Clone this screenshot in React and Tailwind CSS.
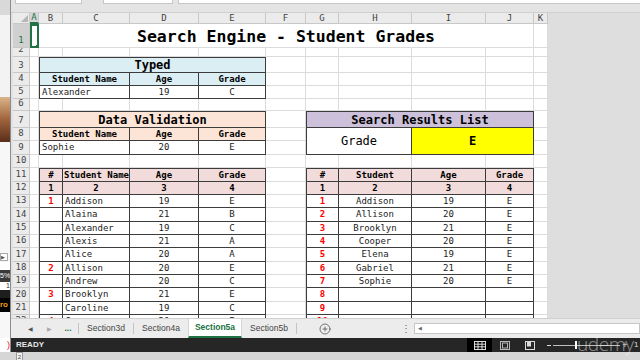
import { CirclePlus } from "lucide-react";

const MONO = "font-['DejaVu_Sans_Mono','Liberation_Mono',monospace]";
const SANS = "font-['Liberation_Sans',Arial,sans-serif]";

// grid placement classes, written out so Tailwind sees them
const CS = ["", "col-start-1", "col-start-2", "col-start-3", "col-start-4", "col-start-5", "col-start-6", "col-start-7", "col-start-8", "col-start-9", "col-start-10", "col-start-11", "col-start-12"];
const CE = ["", "col-end-1", "col-end-2", "col-end-3", "col-end-4", "col-end-5", "col-end-6", "col-end-7", "col-end-8", "col-end-9", "col-end-10", "col-end-11", "col-end-12", "col-end-13"];
const RS = ["", "row-start-1", "row-start-2", "row-start-3", "row-start-4", "row-start-5", "row-start-6", "row-start-7", "row-start-8", "row-start-9", "row-start-10", "row-start-11", "row-start-12", "row-start-13", "row-start-14", "row-start-15", "row-start-16", "row-start-17", "row-start-18", "row-start-19", "row-start-20", "row-start-21", "row-start-22", "row-start-23", "row-start-24"];
const RE = ["", "row-end-1", "row-end-2", "row-end-3", "row-end-4", "row-end-5", "row-end-6", "row-end-7", "row-end-8", "row-end-9", "row-end-10", "row-end-11", "row-end-12", "row-end-13", "row-end-14", "row-end-15", "row-end-16", "row-end-17", "row-end-18", "row-end-19", "row-end-20", "row-end-21", "row-end-22", "row-end-23", "row-end-24", "row-end-25"];

const COLS = ["A", "B", "C", "D", "E", "F", "G", "H", "I", "J", "K"];
const ROWS = Array.from({ length: 22 }, (_, i) => i + 1);

// sheet col letter -> grid column, sheet row -> grid row
const pos = (letter, row, span = 1, rows = 1) => {
  const c = COLS.indexOf(letter) + 2;
  const r = row + 1;
  return `${CS[c]} ${RS[r]} ${span > 1 ? CE[c + span] : ""} ${rows > 1 ? RE[r + rows] : ""}`;
};

const students = [
  ["1", "Addison", "19", "E"],
  ["", "Alaina", "21", "B"],
  ["", "Alexander", "19", "C"],
  ["", "Alexis", "21", "A"],
  ["", "Alice", "20", "A"],
  ["2", "Allison", "20", "E"],
  ["", "Andrew", "20", "C"],
  ["3", "Brooklyn", "21", "E"],
  ["", "Caroline", "19", "C"],
  ["4", "Cooper", "20", "E"],
];

const results = [
  ["1", "Addison", "19", "E"],
  ["2", "Allison", "20", "E"],
  ["3", "Brooklyn", "21", "E"],
  ["4", "Cooper", "20", "E"],
  ["5", "Elena", "19", "E"],
  ["6", "Gabriel", "21", "E"],
  ["7", "Sophie", "20", "E"],
  ["8", "", "", ""],
  ["9", "", "", ""],
  ["10", "", "", ""],
];

function T({ c, r, span = 1, rows = 1, top, left, bg = "bg-white", align = "justify-center", className = "", children }) {
  return (
    <div
      className={`${pos(c, r, span, rows)} ${bg} ${align} flex items-center overflow-hidden whitespace-nowrap leading-none border-r border-b border-[#3c3c3c] ${top ? "border-t" : ""} ${left ? "border-l" : ""} ${className}`}
    >
      {children}
    </div>
  );
}

function SideWindow() {
  return (
    <div className={`w-[11px] flex flex-col border-r border-[#8c8c8c] overflow-hidden ${SANS}`}>
      <div className="h-[15px] bg-[#d9d9d9]" />
      <div className="h-[82px] bg-[#f3f3f3]" />
      <div className="h-[45px] bg-gradient-to-b from-[#d9b48a] via-[#a0643c] to-[#5a2e1c]" />
      <div className="h-[110px] bg-[#f7f7f7]" />
      <div className="h-[10px] bg-[#f7f7f7] flex items-center">
        <span className="w-[8px] h-[8px] border border-[#aaa] bg-white text-[5px] leading-[6px] text-[#555]">▶</span>
      </div>
      <div className="h-[8px] bg-white" />
      <div className="h-[12px] bg-[#3a3a3a] text-[7px] text-white leading-[12px] whitespace-nowrap">5%</div>
      <div className="h-[8px] bg-white text-[7px] text-right leading-[8px] text-[#333]">1</div>
      <div className="h-[8px] bg-[#1e1e1e]" />
      <div className="h-[14px] bg-black text-[8px] font-bold text-[#f39c12] leading-[14px]">ro</div>
      <div className="flex-1 bg-[#f7f7f7]" />
      <div className="h-[14px] bg-white text-[#d22] text-[9px] leading-[14px] text-right">)</div>
    </div>
  );
}

function TopStrip() {
  return (
    <div className="h-[13px] flex bg-[#e4e4e4] border-b border-[#d0d0d0]">
      <div className="ml-[4px] w-[67px] h-[4px] bg-white border-x border-b border-[#c6c6c6]" />
      <div className="ml-[21px] w-[70px] h-[4px] bg-white border-x border-b border-[#c6c6c6]" />
      <div className="ml-[5px] flex-1 h-[4px] bg-white border-l border-b border-[#c6c6c6]" />
    </div>
  );
}

function Sheet() {
  return (
    <div
      className={`grid grid-cols-[17px_9px_24px_67px_69px_67px_40px_33px_73px_74px_48px_14px] grid-rows-[11px_24px_9px_16px_13px_13px_12px_17px_13px_14px_13px_14px_13px_13px_14px_13px_13px_14px_13px_13px_14px_13px_13px] w-[535px] h-full overflow-hidden text-[9px] text-[#222] ${MONO}`}
    >
      {/* gridlines */}
      {ROWS.map((row) =>
        COLS.map((letter) => (
          <div key={letter + row} className={`${pos(letter, row)} bg-white border-r border-b border-[#dcdcdc]`} />
        ))
      )}

      {/* corner */}
      <div className="col-start-1 row-start-1 bg-[#ebebeb] border-r border-b border-[#c8c8c8] flex items-end justify-end p-[1px]">
        <svg width="7" height="7" viewBox="0 0 7 7">
          <polygon points="7,0 7,7 0,7" fill="#b5b5b5" />
        </svg>
      </div>

      {/* column letters */}
      {COLS.map((letter, i) => (
        <div
          key={"h" + letter}
          className={`${CS[i + 2]} row-start-1 flex items-center justify-center leading-none border-r border-[#c8c8c8] ${
            letter === "A" ? "bg-[#d6d6d6] text-[#217346] border-b-2 border-b-[#217346]" : "bg-[#ebebeb] text-[#444] border-b"
          }`}
        >
          {letter}
        </div>
      ))}

      {/* row numbers */}
      {ROWS.map((row) => (
        <div
          key={"r" + row}
          className={`col-start-1 ${RS[row + 1]} flex items-end justify-center pb-[2px] overflow-hidden leading-none border-r border-b border-[#c8c8c8] ${
            row === 1 ? "bg-[#d0d0d0] text-[#217346]" : "bg-[#ebebeb] text-[#444]"
          }`}
        >
          {row}
        </div>
      ))}

      {/* selected A1 */}
      <div className={`${pos("A", 1)} relative border-2 border-[#217346]`}>
        <span className="absolute -right-[2px] -bottom-[2px] w-[3px] h-[3px] bg-[#217346]" />
      </div>

      {/* title */}
      <div className={`${pos("B", 1, 9)} bg-white border-r border-b border-[#dcdcdc] flex items-center justify-center pt-[3px] text-[16.5px] font-bold text-black leading-none whitespace-nowrap`}>
        Search Engine - Student Grades
      </div>

      {/* Typed */}
      <T c="B" r={3} span={4} top left bg="bg-[#daeef3]" className="text-[12px] font-bold text-black">Typed</T>
      <T c="B" r={4} span={2} left bg="bg-[#daeef3]" className="font-bold text-black">Student Name</T>
      <T c="D" r={4} bg="bg-[#daeef3]" className="font-bold text-black">Age</T>
      <T c="E" r={4} bg="bg-[#daeef3]" className="font-bold text-black">Grade</T>
      <T c="B" r={5} span={2} left align="justify-start pl-[2px]">Alexander</T>
      <T c="D" r={5}>19</T>
      <T c="E" r={5}>C</T>

      {/* Data Validation */}
      <T c="B" r={7} span={4} top left bg="bg-[#fce4d6]" className="text-[12px] font-bold text-black">Data Validation</T>
      <T c="B" r={8} span={2} left bg="bg-[#fce4d6]" className="font-bold text-black">Student Name</T>
      <T c="D" r={8} bg="bg-[#fce4d6]" className="font-bold text-black">Age</T>
      <T c="E" r={8} bg="bg-[#fce4d6]" className="font-bold text-black">Grade</T>
      <T c="B" r={9} span={2} left align="justify-start pl-[2px]">Sophie</T>
      <T c="D" r={9}>20</T>
      <T c="E" r={9}>E</T>

      {/* Search results box */}
      <T c="G" r={7} span={4} top left bg="bg-[#ccc0da]" className="text-[12px] font-bold text-black">Search Results List</T>
      <T c="G" r={8} span={2} rows={2} left className="text-[12px] text-black">Grade</T>
      <T c="I" r={8} span={2} rows={2} bg="bg-[#ffff00]" className="text-[12px] font-bold text-black">E</T>

      {/* student list */}
      <T c="B" r={11} top left bg="bg-[#f2dcdb]" className="font-bold text-black">#</T>
      <T c="C" r={11} top bg="bg-[#f2dcdb]" align="justify-start pl-[1px]" className="font-bold text-black">Student Name</T>
      <T c="D" r={11} top bg="bg-[#f2dcdb]" className="font-bold text-black">Age</T>
      <T c="E" r={11} top bg="bg-[#f2dcdb]" className="font-bold text-black">Grade</T>
      <T c="B" r={12} left bg="bg-[#f2dcdb]" className="font-bold text-black">1</T>
      <T c="C" r={12} bg="bg-[#f2dcdb]" className="font-bold text-black">2</T>
      <T c="D" r={12} bg="bg-[#f2dcdb]" className="font-bold text-black">3</T>
      <T c="E" r={12} bg="bg-[#f2dcdb]" className="font-bold text-black">4</T>
      {students.map(([n, name, age, grade], i) => (
        <div key={"s" + i} className="contents">
          <T c="B" r={13 + i} left className="font-bold text-[#ff0000]">{n}</T>
          <T c="C" r={13 + i} align="justify-start pl-[2px]">{name}</T>
          <T c="D" r={13 + i}>{age}</T>
          <T c="E" r={13 + i}>{grade}</T>
        </div>
      ))}

      {/* results list */}
      <T c="G" r={11} top left bg="bg-[#f2dcdb]" className="font-bold text-black">#</T>
      <T c="H" r={11} top bg="bg-[#f2dcdb]" className="font-bold text-black">Student</T>
      <T c="I" r={11} top bg="bg-[#f2dcdb]" className="font-bold text-black">Age</T>
      <T c="J" r={11} top bg="bg-[#f2dcdb]" className="font-bold text-black">Grade</T>
      <T c="G" r={12} left bg="bg-[#f2dcdb]" className="font-bold text-black">1</T>
      <T c="H" r={12} bg="bg-[#f2dcdb]" className="font-bold text-black">2</T>
      <T c="I" r={12} bg="bg-[#f2dcdb]" className="font-bold text-black">3</T>
      <T c="J" r={12} bg="bg-[#f2dcdb]" className="font-bold text-black">4</T>
      {results.map(([n, name, age, grade], i) => (
        <div key={"q" + i} className="contents">
          <T c="G" r={13 + i} left className="font-bold text-[#ff0000]">{n}</T>
          <T c="H" r={13 + i}>{name}</T>
          <T c="I" r={13 + i}>{age}</T>
          <T c="J" r={13 + i}>{grade}</T>
        </div>
      ))}
    </div>
  );
}

function Sep() {
  return <div className="w-px my-[4px] bg-[#c4c4c4]" />;
}

function Tab({ label, active }) {
  return (
    <div
      className={`w-[54px] flex items-center justify-center overflow-hidden whitespace-nowrap ${
        active ? "bg-white text-[#217346] font-bold border-b-2 border-[#217346] border-x border-x-[#d4d4d4]" : "text-[#444]"
      }`}
    >
      {label}
    </div>
  );
}

function TabBar() {
  return (
    <div className={`h-[20px] flex items-stretch bg-[#ececec] border-t border-[#d0d0d0] text-[8.5px] leading-none ${SANS}`}>
      <div className="w-[14px]" />
      <div className="w-[10px] flex items-center justify-center text-[6px] text-[#555]">◀</div>
      <div className="w-[9px]" />
      <div className="w-[10px] flex items-center justify-center text-[6px] text-[#aaa]">▶</div>
      <div className="w-[8px]" />
      <div className="w-[12px] flex items-center justify-center font-bold text-[#217346]">...</div>
      <div className="w-[4px]" />
      <Sep />
      <Tab label="Section3d" />
      <Sep />
      <Tab label="Section4a" />
      <Tab label="Section5a" active />
      <Tab label="Section5b" />
      <Sep />
      <div className="w-[22px]" />
      <div className="flex items-center">
        <CirclePlus size={12} strokeWidth={1.6} color="#555" />
      </div>
      <div className="w-[72px]" />
      <div className="w-[6px] flex items-center justify-center text-[#666] text-[10px]">⋮</div>
      <div className="w-[5px]" />
      <div className="flex-1 my-[4px] bg-white border border-[#c6c6c6] flex items-center pl-[3px] text-[5px] text-[#666]">◀</div>
    </div>
  );
}

function StatusBar() {
  return (
    <div className={`h-[14px] flex items-stretch bg-[#262626] text-[8px] leading-none ${SANS}`}>
      <div className="pl-[5px] flex items-center font-bold text-[#e6e6e6]">READY</div>
      <div className="flex-1" />
      <div className="w-[25px] bg-black flex items-center justify-center">
        <svg width="12" height="9" viewBox="0 0 12 9">
          <rect x="0.5" y="0.5" width="11" height="8" fill="none" stroke="#dcdcdc" />
          <path d="M4 0.5V8.5M8 0.5V8.5M0.5 3.2H11.5M0.5 5.8H11.5" stroke="#dcdcdc" />
        </svg>
      </div>
      <div className="w-[8px]" />
      <div className="w-[10px] flex items-center">
        <svg width="10" height="9" viewBox="0 0 10 9">
          <rect x="0.5" y="0.5" width="9" height="8" fill="none" stroke="#b8b8b8" />
          <rect x="2.5" y="2" width="5" height="5" fill="none" stroke="#b8b8b8" />
        </svg>
      </div>
      <div className="w-[15px]" />
      <div className="w-[10px] flex items-center">
        <svg width="10" height="9" viewBox="0 0 10 9">
          <rect x="0.5" y="0.5" width="9" height="8" fill="none" stroke="#dcdcdc" />
          <rect x="2" y="1" width="4" height="4.5" fill="#dcdcdc" />
        </svg>
      </div>
      <div className="w-[12px]" />
      <div className="w-[4px] flex items-center">
        <span className="w-[4px] h-px bg-[#dcdcdc]" />
      </div>
      <div className="w-[71px] flex items-center px-[2px]">
        <div className="flex-1 h-px bg-[#bdbdbd]" />
        <span className="w-[2px] h-[8px] bg-white" />
        <div className="flex-1 h-px bg-[#bdbdbd]" />
        <div className="flex-1 h-px bg-[#bdbdbd]" />
      </div>
      <div className="w-[6px] flex items-center justify-center text-[#dcdcdc] text-[9px]">+</div>
      <div className="w-[6px]" />
      <div className="w-[6px] flex items-center text-[#dcdcdc]">1</div>
    </div>
  );
}

export default function App() {
  return (
    <div className="relative w-[640px] h-[360px] overflow-hidden flex flex-col bg-[#d6d6d6]">
      <div className="flex h-[352px]">
        <SideWindow />
        <div className="flex-1 flex flex-col min-w-0">
          <TopStrip />
          <div className="h-[305px] flex overflow-hidden bg-[#dedede]">
            <div className="w-[2px] bg-[#e2e2e2]" />
            <Sheet />
            <div className="flex-1" />
          </div>
          <TabBar />
          <StatusBar />
        </div>
      </div>
      <div className={`h-[8px] flex items-start bg-[#d6d6d6] ${SANS}`}>
        <div className="ml-[16px] w-[7px] h-[8px] bg-[#f0f0f0] border-x border-t border-[#9a9a9a] text-[6px] leading-[8px] text-center text-[#444]">2</div>
      </div>
      {/* watermark */}
      <div className="absolute left-[577px] top-[330px] text-[19px] font-['Noto_Sans',sans-serif] font-light text-white/45 tracking-tight pointer-events-none">
        udemy
      </div>
    </div>
  );
}
